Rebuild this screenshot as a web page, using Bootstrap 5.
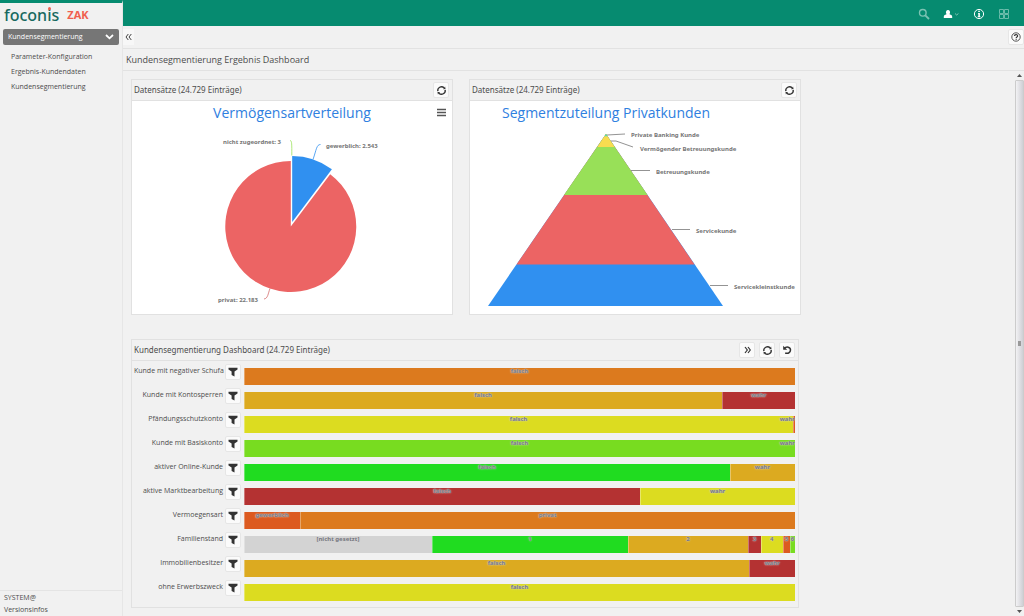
<!DOCTYPE html>
<html lang="de">
<head>
<meta charset="utf-8">
<meta name="viewport" content="width=device-width, initial-scale=1">
<title>foconis ZAK – Kundensegmentierung</title>
<link href="https://cdn.jsdelivr.net/npm/bootstrap@5.3.0/dist/css/bootstrap.min.css" rel="stylesheet">
<style>
body{font-family:"Open Sans","Noto Sans",sans-serif;font-size:7px;line-height:14px;color:#4c4c4c;background:#f1f1f1}
svg{display:block}
.side{width:123px;background:#f1f1f1;border-right:1px solid #e6e6e6;border-top:3px solid #068b70}
.brand{height:26px;padding:0 4px;gap:8px;text-decoration:none;color:#17695f;font:500 16px/24px "Noto Sans",sans-serif}
.brand b{font:700 11px/24px "Open Sans",sans-serif;color:#f0604f}
.dotted{position:relative}
.dotted::after{content:"";position:absolute;left:1px;top:3px;width:3px;height:3px;border-radius:50%;background:#f0604f}
.picker{margin:0 3px;height:16px;padding:0 5px;border:0;border-radius:2px;background:#767676;color:#fff;font-size:7px;line-height:16px}
.menu a,.foot a{color:#4c4c4c;text-decoration:none;display:block}
.menu{padding:5px 11px}
.menu a{line-height:14px;margin-bottom:1px;font-size:7px}
.foot{border-top:1px solid #e4e4e4;padding:1px 4px 0}
.foot a{line-height:12px}
.topbar{height:26px;background:#068b70;padding:2px 14px 0 0;gap:13px}
.topbar button,.plain{border:0;background:none;padding:0;color:#fff}
.tools{height:23px;border-bottom:1px solid #e2e2e2}
.fold{width:11px;height:16px;display:flex;align-items:center;justify-content:center;background:#f7f7f7}
.headline{height:22px;border-bottom:1px solid #e2e2e2;padding:0 3px;font-size:9px;line-height:22px;margin:0;font-weight:400}
.board{padding:8px;overflow:hidden}
.inner{max-width:670px}
.charts{display:grid;grid-template-columns:322fr 332fr;gap:16px;margin-bottom:24px}
.panel{border:1px solid #e1e1e1;min-width:0}
.panel-top{height:21px;padding:0 3px 0 2px;border-bottom:1px solid #e1e1e1;gap:4px}
.panel-top h2{font:400 8px/20px "Noto Sans",sans-serif;margin:0}
.tool{width:16px;height:16px;padding:0;border:1px solid #e6e6e6;background:#fbfbfb;border-radius:2px;color:#333;display:flex;align-items:center;justify-content:center;flex:none}
.chart-title{font-size:14px;fill:#2f80e0;text-anchor:middle}
.tag{font-size:6px;font-weight:700;fill:#757575;font-family:"Noto Sans",sans-serif}
.segments{margin-right:2px}
.rows{padding:1px 3px 5px 2px}
.line{display:grid;grid-template-columns:89px 16px 1fr;column-gap:2px;height:24px}
.line>span{text-align:right;white-space:nowrap;line-height:16px;padding-top:1px}
.line .tool{margin-top:2px}
.stack{display:flex;height:17px;margin:6px 0 0 1px;overflow:hidden;min-width:0;position:relative}
.stack div{height:17px;text-align:center;font:700 6px/7px "Noto Sans",sans-serif;color:#777780;white-space:nowrap;overflow:hidden;text-shadow:0 0 2px #d4d4d4,0 0 1px #d4d4d4;box-shadow:inset 1px 0 #ffffff55}
.stack em{position:absolute;right:0;top:0;font:700 6px/7px "Noto Sans",sans-serif;color:#777780;text-shadow:0 0 2px #d4d4d4,0 0 1px #d4d4d4}
.c-or{background:#dc7a1e}.c-go{background:#dcaa20}.c-ye{background:#dcdc20}.c-li{background:#78dc20}.c-gr{background:#20dc20}.c-re{background:#b43232}.c-ro{background:#dc5a20}.c-no{background:#d3d3d3}
.rail{width:9px;flex:none}
.rail button{height:9px;display:flex;justify-content:center;align-items:center;width:9px}
.thumb{border:1px solid #ccc;border-radius:1px;background:linear-gradient(90deg,#f2f2f4,#cfcfd5)}
.grip{width:3px;height:5px;background:#999}
</style>
</head>
<body>
<svg class="d-none" aria-hidden="true">
<symbol id="reload" viewBox="0 0 12 12"><path d="M2 6.800A4.100 4.100 0 0 1 8.800 3M10 5.200A4.100 4.100 0 0 1 3.200 9" fill="none" stroke="currentColor" stroke-width="1.500"/><path d="M7.600 4.500 10.400 4.400 9.900 1.600zM4.400 7.500 1.600 7.600 2.100 10.400z" fill="currentColor"/></symbol>
<symbol id="funnel" viewBox="0 0 10 10"><path d="M.5.800h9v1.600L6.500 4.600v4.800L3.600 8V4.600L.5 2.400z" fill="currentColor"/></symbol>
</svg>
<div class="d-flex vh-100 overflow-hidden">
<aside class="side d-flex flex-column flex-shrink-0">
<a class="brand d-flex" href="#"><span>focon<span class="dotted">i</span>s</span><b>ZAK</b></a>
<button class="picker d-flex justify-content-between align-items-center"><span>Kundensegmentierung</span><svg width="9" height="6" viewBox="0 0 9 6"><path d="m1 1 3.500 3.300L8 1" fill="none" stroke="#fff" stroke-width="1.800"/></svg></button>
<nav class="menu flex-grow-1"><a href="#">Parameter-Konfiguration</a><a href="#">Ergebnis-Kundendaten</a><a href="#">Kundensegmentierung</a></nav>
<div class="foot"><a href="#">SYSTEM@</a><a href="#">Versionsinfos</a></div>
</aside>
<div class="d-flex flex-column flex-grow-1 overflow-hidden">
<header class="topbar d-flex justify-content-end align-items-center flex-shrink-0">
<button aria-label="Suche"><svg width="12" height="12" viewBox="0 0 12 12" fill="none" stroke="#7cc3b3" stroke-width="1.400"><circle cx="4.800" cy="4.800" r="3.300"/><path d="m7.300 7.300 3.700 3.700" stroke-width="1.800"/></svg></button>
<button aria-label="Benutzer"><svg width="17" height="12" viewBox="0 0 17 12"><path d="M5 2a2.100 2.300 0 0 1 1.700 3.600v1c1.800.4 2.500 1 2.500 2.400v1H.8V9c0-1.400.7-2 2.500-2.400v-1A2.100 2.300 0 0 1 5 2z" fill="#fff"/><path d="m12 5.500 1.700 1.500 1.700-1.500" fill="none" stroke="#7cc3b3"/></svg></button>
<button aria-label="Info"><svg width="12" height="12" viewBox="0 0 12 12"><circle cx="6" cy="6" r="4.600" fill="none" stroke="#fff"/><path d="M5.200 2.800h1.700v1.300H5.200zM5 5h1.900v3.300h.5v.9H4.700v-.9h.6V5.800H5z" fill="#fff"/></svg></button>
<button aria-label="Anwendungen"><svg width="12" height="12" viewBox="0 0 12 12" fill="none" stroke="#6bbbaa"><path d="M1.500 1.500h4v4h-4zM6.500 1.500h4v4h-4zM1.500 6.500h4v4h-4zM6.500 6.500h4v4h-4z"/></svg></button>
</header>
<div class="tools d-flex justify-content-between align-items-center flex-shrink-0">
<button class="plain fold" aria-label="Einklappen"><svg width="7" height="8" viewBox="0 0 7 8"><path d="M3.300 1 1 4l2.300 3M6.300 1 4 4l2.300 3" fill="none" stroke="#444"/></svg></button>
<button class="tool" aria-label="Hilfe"><svg width="10" height="10" viewBox="0 0 10 10"><circle cx="5" cy="5" r="4.200" fill="none" stroke="#444" stroke-width=".9"/><path d="M3.500 4.100c0-2 3.100-2 3.100-.2C6.600 5 5.200 4.800 5.200 6M5.200 6.800v1" fill="none" stroke="#333" stroke-width="1.200"/></svg></button>
</div>
<h1 class="headline flex-shrink-0">Kundensegmentierung Ergebnis Dashboard</h1>
<div class="d-flex flex-grow-1 overflow-hidden">
<main class="board flex-grow-1"><div class="inner">
<div class="charts">
<section class="panel">
<div class="panel-top d-flex align-items-center"><h2 class="me-auto">Datensätze (24.729 Einträge)</h2><button class="tool" aria-label="Neu laden"><svg width="11" height="11"><use href="#reload"/></svg></button></div>
<svg class="w-100 bg-white" viewBox="0 0 320 213" role="img" aria-label="Vermögensartverteilung">
<text class="chart-title" x="160" y="17">Vermögensartverteilung</text>
<path d="M305 8.500h9M305 11.500h9M305 14.500h9" stroke="#555" stroke-width="1.600"/>
<path d="M158.800 125.500 198.200 73.200A65.500 65.500 0 1 1 158.800 60z" fill="#ec6464"/>
<path d="M160.200 121V55a66 66 0 0 1 39.700 13.300z" fill="#3090f0"/>
<path d="M158 39.500c2 0 1.800 4 1.800 15" fill="none" stroke="#9be25b" stroke-width=".8"/><path d="M188.500 43.500c-4 0-4 5-7.500 15" fill="none" stroke="#3090f0" stroke-width=".8"/><path d="M138 187.500c-2 5-2 10-6 10.500" fill="none" stroke="#d36a6a" stroke-width=".8"/>
<text class="tag" x="91" y="43">nicht zugeordnet: 3</text><text class="tag" x="194" y="47">gewerblich: 2.543</text><text class="tag" x="86" y="201">privat: 22.183</text>
</svg>
</section>
<section class="panel">
<div class="panel-top d-flex align-items-center"><h2 class="me-auto">Datensätze (24.729 Einträge)</h2><button class="tool" aria-label="Neu laden"><svg width="11" height="11"><use href="#reload"/></svg></button></div>
<svg class="w-100 bg-white" viewBox="0 0 330 213" role="img" aria-label="Segmentzuteilung Privatkunden">
<text class="chart-title" x="136" y="17">Segmentzuteilung Privatkunden</text>
<path d="M136 33 18 205h235z" fill="#3090f0"/><path d="M136 33 46.500 163.500h178z" fill="#ec6464"/><path d="M136 33 94 94h83.500z" fill="#98e058"/><path d="M136 33 127.500 46h17z" fill="#f8dc50"/><path d="m136 33-1.500 2.200h3z" fill="#50d8b0"/>
<path d="M137 34 155 33M141 40h5l17 6M161 69.500h19M202 128.500h18M240 184.500h18" fill="none" stroke="#777" stroke-width=".8"/>
<text class="tag" x="161" y="36">Private Banking Kunde</text><text class="tag" x="170" y="50">Vermögender Betreuungskunde</text><text class="tag" x="186" y="73">Betreuungskunde</text><text class="tag" x="226" y="132">Servicekunde</text><text class="tag" x="264" y="188">Servicekleinstkunde</text>
</svg>
</section>
</div>
<section class="panel segments">
<div class="panel-top d-flex align-items-center"><h2 class="me-auto">Kundensegmentierung Dashboard (24.729 Einträge)</h2>
<button class="tool" aria-label="Weiter"><svg width="7" height="8" viewBox="0 0 7 8"><path d="m1 1 2.300 3L1 7M4 1l2.300 3L4 7" fill="none" stroke="#333" stroke-width="1.200"/></svg></button>
<button class="tool" aria-label="Neu laden"><svg width="11" height="11"><use href="#reload"/></svg></button>
<button class="tool" aria-label="Zurücksetzen"><svg width="10" height="10" viewBox="0 0 10 10"><path d="M2.200 3.600C4.500 1 8.500 2 8.500 5.100 8.500 8 5.500 8.900 3.200 8" fill="none" stroke="#333" stroke-width="1.500"/><path d="M1.200.8v4h4z" fill="#333"/></svg></button></div>
<div class="rows">
<div class="line"><span>Kunde mit negativer Schufa</span><button class="tool" aria-label="Filter"><svg width="10" height="10"><use href="#funnel"/></svg></button><div class="stack"><div class="c-or" style="width:100%">falsch</div></div></div>
<div class="line"><span>Kunde mit Kontosperren</span><button class="tool" aria-label="Filter"><svg width="10" height="10"><use href="#funnel"/></svg></button><div class="stack"><div class="c-go" style="width:86.8%">falsch</div><div class="c-re" style="width:13.2%">wahr</div></div></div>
<div class="line"><span>Pfändungsschutzkonto</span><button class="tool" aria-label="Filter"><svg width="10" height="10"><use href="#funnel"/></svg></button><div class="stack"><div class="c-ye" style="width:99.7%">falsch</div><div class="c-ro" style="width:.3%"></div><em>wahr</em></div></div>
<div class="line"><span>Kunde mit Basiskonto</span><button class="tool" aria-label="Filter"><svg width="10" height="10"><use href="#funnel"/></svg></button><div class="stack"><div class="c-li" style="width:100%">falsch</div><em>wahr</em></div></div>
<div class="line"><span>aktiver Online-Kunde</span><button class="tool" aria-label="Filter"><svg width="10" height="10"><use href="#funnel"/></svg></button><div class="stack"><div class="c-gr" style="width:88.2%">falsch</div><div class="c-go" style="width:11.8%">wahr</div></div></div>
<div class="line"><span>aktive Marktbearbeitung</span><button class="tool" aria-label="Filter"><svg width="10" height="10"><use href="#funnel"/></svg></button><div class="stack"><div class="c-re" style="width:71.9%">falsch</div><div class="c-ye" style="width:28.1%">wahr</div></div></div>
<div class="line"><span>Vermoegensart</span><button class="tool" aria-label="Filter"><svg width="10" height="10"><use href="#funnel"/></svg></button><div class="stack"><div class="c-ro" style="width:10.2%">gewerblich</div><div class="c-or" style="width:89.8%">privat</div></div></div>
<div class="line"><span>Familienstand</span><button class="tool" aria-label="Filter"><svg width="10" height="10"><use href="#funnel"/></svg></button><div class="stack"><div class="c-no" style="width:34.1%">[nicht gesetzt]</div><div class="c-gr" style="width:35.6%">1</div><div class="c-go" style="width:21.8%">2</div><div class="c-re" style="width:2.3%">3</div><div class="c-ye" style="width:4%">4</div><div class="c-ro" style="width:1.3%">5</div><div class="c-li" style="width:.9%">6</div></div></div>
<div class="line"><span>Immobilienbesitzer</span><button class="tool" aria-label="Filter"><svg width="10" height="10"><use href="#funnel"/></svg></button><div class="stack"><div class="c-go" style="width:91.7%">falsch</div><div class="c-re" style="width:8.3%">wahr</div></div></div>
<div class="line"><span>ohne Erwerbszweck</span><button class="tool" aria-label="Filter"><svg width="10" height="10"><use href="#funnel"/></svg></button><div class="stack"><div class="c-ye" style="width:100%">falsch</div></div></div>
</div>
</section>
</div></main>
<div class="rail d-flex flex-column">
<button class="plain" aria-label="Nach oben"><svg width="5" height="3"><path d="M0 3 2.500 0 5 3z" fill="#555"/></svg></button>
<div class="thumb flex-grow-1 d-flex align-items-center justify-content-center"><div class="grip"></div></div>
<button class="plain" aria-label="Nach unten"><svg width="5" height="3"><path d="M0 0h5L2.500 3z" fill="#555"/></svg></button>
</div>
</div>
</div>
</div>
<script src="https://cdn.jsdelivr.net/npm/bootstrap@5.3.0/dist/js/bootstrap.bundle.min.js"></script>
</body>
</html>
